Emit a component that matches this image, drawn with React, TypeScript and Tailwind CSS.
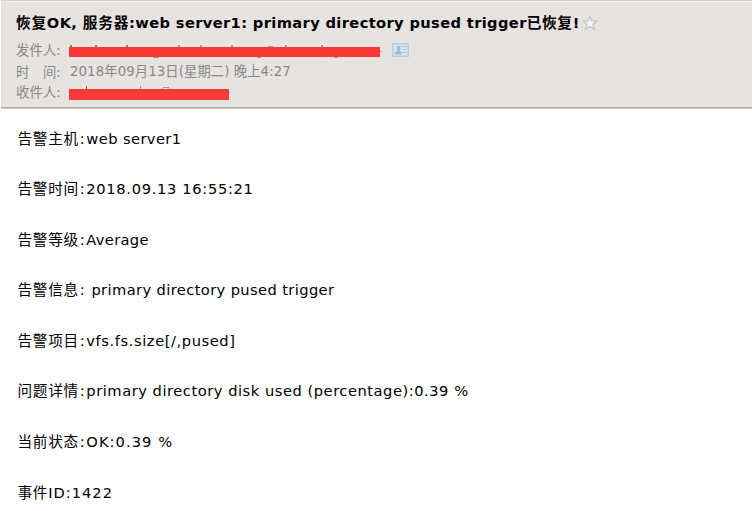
type Row = { label: string; colon: boolean; value: string; tracking: string };

const rows: Row[] = [
  { label: "告警主机", colon: true, value: "web server1", tracking: "tracking-[0.4px]" },
  { label: "告警时间", colon: true, value: "2018.09.13 16:55:21", tracking: "tracking-[0.67px]" },
  { label: "告警等级", colon: true, value: "Average", tracking: "tracking-[0.33px]" },
  { label: "告警信息", colon: true, value: " primary directory pused trigger", tracking: "tracking-[0.39px]" },
  { label: "告警项目", colon: true, value: "vfs.fs.size[/,pused]", tracking: "tracking-[0.58px]" },
  { label: "问题详情", colon: true, value: "primary directory disk used (percentage):0.39 %", tracking: "tracking-[0.53px]" },
  { label: "当前状态", colon: true, value: "OK:0.39 %", tracking: "tracking-[1.05px]" },
  { label: "事件", colon: false, value: "ID:1422", tracking: "tracking-[1px]" },
];

const latin = "font-['DejaVu_Sans','Noto_Sans_CJK_SC',sans-serif]";
const cjk = "font-['Noto_Sans_CJK_SC',sans-serif]";

type Mark = [number, number, number, number, string];

const senderMarks: Mark[] = [
  [1, 0, 2, 2, "#6f9d25"],
  [26, 0, 2, 2, "#6f9d25"],
  [57, 0, 2, 2, "#6f9d25"],
  [84, 12, 6, 1, "#86a344"],
  [109, 0, 2, 2, "#9a9a9a"],
  [131, 0, 2, 2, "#9a9a9a"],
  [162, 0, 2, 2, "#92a0b0"],
  [188, 12, 4, 1, "#a39a90"],
  [199, 1, 5, 1, "#999"],
  [216, 0, 2, 2, "#92a0b0"],
  [252, 0, 2, 2, "#92a0b0"],
  [265, 12, 4, 1, "#a39a90"],
  [311, 6, 2, 1, "#9aa8b6"],
];

const recipientMarks: Mark[] = [
  [17, -1, 1, 3, "#8a5a25"],
  [71, -1, 1, 3, "#8d97a2"],
  [93, 1, 1, 1, "#aaa"],
  [94, 0, 6, 1, "#999"],
  [100, 1, 1, 1, "#aaa"],
  [160, 5, 1, 1, "#a0a0a0"],
];

function Redacted({ width, height, marks }: { width: number; height: number; marks: Mark[] }) {
  return (
    <svg className="block shrink-0 overflow-visible" width={width + 2} height={height + 3} shapeRendering="crispEdges">
      {marks.map(([x, y, w, h, fill]) => (
        <rect key={`${x}-${y}`} x={x} y={y} width={w} height={h} fill={fill} />
      ))}
      <rect x="0" y="2" width={width} height={height} fill="#fc3939" />
    </svg>
  );
}

function ContactCard() {
  return (
    <svg className="ml-[10px] mt-[3px] h-[14px] w-[17px] shrink-0" viewBox="0 0 17 14">
      <rect x="0.75" y="0.75" width="15.5" height="12.5" fill="#d9e4ed" stroke="#b9cddd" strokeWidth="1.5" />
      <path d="M5 3h3.500v4h-1v1l2 1v2.500H3V9L5.500 8V7H5z" fill="#9bbfe0" />
      <path d="M10 3.500h5M11 6.500h4M10 9.500h5" stroke="#abc0d1" />
    </svg>
  );
}

export default function App() {
  return (
    <div className={`h-[511px] w-[752px] overflow-hidden bg-white text-black ${latin}`}>
      <header className="border-l border-white">
        <div className="h-px bg-[#d8d3d0]" />
        <div className="h-[107px] border-y border-t-[#f3f1f0] border-b-[#b0a59f] bg-[#e7e3e0] pl-[15px] pt-[11px]">
          <div className="flex h-5 whitespace-pre text-[14.67px] font-bold">
            <h1 className="leading-5">
              <span className="tracking-[0.75px]">恢复</span>
              <span className="tracking-[0.35px]">OK, </span>
              <span className="tracking-[0.8px]">服务器</span>
              <span className="tracking-[0.36px]">:web server1: primary directory pused trigger</span>
              <span className="tracking-[0.67px]">已恢复!</span>
            </h1>
            <svg className="ml-[2px] mt-[2px] h-4 w-4" viewBox="0 0 16 16">
              <path
                d="M8 1.200l1.900 4.800h5.100l-4 3.300 1.600 5.200L8 11.500l-4.600 3L5 9.300 1 6h5.100z"
                fill="#f6f5f5"
                stroke="#c3c4c6"
                strokeWidth="1.200"
              />
            </svg>
          </div>
          <div className="mt-[7px] flex h-[22px] whitespace-pre text-[13.33px] leading-5 text-[#888]">
            <span className={`w-[53px] tracking-[0.2px] ${cjk}`}>发件人:</span>
            <div className="mt-[5px]">
              <Redacted width={311} height={10} marks={senderMarks} />
            </div>
            <ContactCard />
          </div>
          <div className="flex h-5 whitespace-pre text-[13.33px] leading-5 text-[#888]">
            <span className={`w-[54px] tracking-[0.2px] ${cjk}`}>时　间:</span>
            <span className="tracking-[0.08px]">2018年09月13日(星期二) 晚上4:27</span>
          </div>
          <div className="flex h-[21px] whitespace-pre text-[13.33px] leading-5 text-[#888]">
            <span className={`w-[53px] tracking-[0.2px] ${cjk}`}>收件人:</span>
            <div className="mt-[5px]">
              <Redacted width={160} height={11} marks={recipientMarks} />
            </div>
          </div>
        </div>
        <div className="h-px bg-[#d3ccc8]" />
      </header>
      <main className="flex flex-col pl-[17.5px] pt-[3.6px]">
        {rows.map(({ label, colon, value, tracking }) => (
          <p key={label} className="h-[50.57px] shrink-0 whitespace-pre text-[14.67px] leading-[49px]">
            <span className={`tracking-[0.67px] ${cjk}`}>{label}</span>
            {colon && <span className="pl-[1px] tracking-[1.6px]">:</span>}
            <span className={tracking}>{value}</span>
          </p>
        ))}
      </main>
    </div>
  );
}
